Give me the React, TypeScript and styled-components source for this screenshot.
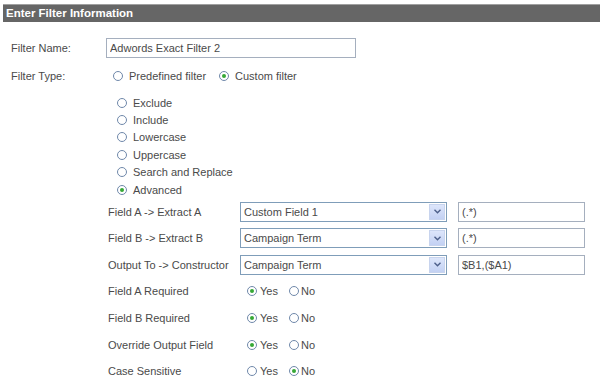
import React from 'react';
import styled, { createGlobalStyle } from 'styled-components';

const GlobalStyle = createGlobalStyle`
  body {
    margin: 0;
    background: #fff;
    font-family: "Liberation Sans", Arial, sans-serif;
    font-size: 11px;
    color: #4a4a4a;
  }
`;

const options = ['Exclude', 'Include', 'Lowercase', 'Uppercase', 'Search and Replace', 'Advanced'];

const fields = [
  { label: 'Field A -> Extract A', select: 'Custom Field 1', value: '(.*)' },
  { label: 'Field B -> Extract B', select: 'Campaign Term', value: '(.*)' },
  { label: 'Output To -> Constructor', select: 'Campaign Term', value: '$B1,($A1)' },
];

const flags = [
  { label: 'Field A Required', yes: true },
  { label: 'Field B Required', yes: true },
  { label: 'Override Output Field', yes: true },
  { label: 'Case Sensitive', yes: false },
];

const Radio: React.FC<{ checked?: boolean; label: string; gap?: number }> = ({ checked, label, gap }) => (
  <RadioLabel gap={gap}>
    <Dot checked={checked} />
    {label}
  </RadioLabel>
);

const App: React.FC = () => {
  return (
    <Page>
      <GlobalStyle />
      <Header>Enter Filter Information</Header>
      <Form>
        <Row>
          <Label>Filter Name:</Label>
          <TextInput width={250} defaultValue="Adwords Exact Filter 2" />
        </Row>
        <TypeRow>
          <Label>Filter Type:</Label>
          <Radios>
            <Radio label="Predefined filter" />
            <Radio checked label="Custom filter" />
          </Radios>
        </TypeRow>
        <OptionList>
          {options.map((o) => (
            <Option key={o}>
              <Radio checked={o === 'Advanced'} label={o} />
            </Option>
          ))}
        </OptionList>
        <SubGrid>
          {fields.map((f) => (
            <SubRow key={f.label}>
              <SubLabel>{f.label}</SubLabel>
              <Select>
                <SelectText>{f.select}</SelectText>
                <Arrow>
                  <svg width="7" height="5" viewBox="0 0 7 5">
                    <path d="M0.5 0.8 L3.5 3.8 L6.5 0.8" fill="none" stroke="#4d5f8a" strokeWidth="1.4" />
                  </svg>
                </Arrow>
              </Select>
              <TextInput width={127} defaultValue={f.value} />
            </SubRow>
          ))}
          {flags.map((f) => (
            <SubRow key={f.label}>
              <SubLabel>{f.label}</SubLabel>
              <YesNo>
                <Radio checked={f.yes} label="Yes" gap={3} />
                <Radio checked={!f.yes} label="No" gap={2} />
              </YesNo>
            </SubRow>
          ))}
        </SubGrid>
      </Form>
    </Page>
  );
};

const Page = styled.div`
  width: 600px;
  height: 387px;
  padding-top: 4px;
  box-sizing: border-box;
  overflow: hidden;
`;

const Header = styled.div`
  margin-left: 3px;
  height: 18px;
  background: #666;
  border-top: 1px solid #a0a0a0;
  box-sizing: border-box;
  color: #fff;
  font-weight: bold;
  font-size: 11.5px;
  line-height: 17px;
  padding-left: 3px;
`;

const Form = styled.div`
  padding: 16px 0 0 11px;
`;

const Row = styled.div`
  display: flex;
  align-items: center;
  height: 20px;
`;

const TypeRow = styled(Row)`
  height: 17px;
  margin-top: 9px;
`;

const Label = styled.div`
  width: 95px;
`;

const TextInput = styled.input<{ width: number }>`
  width: ${(p) => p.width}px;
  height: 20px;
  box-sizing: border-box;
  border: 1px solid #a5afbe;
  padding: 0 3px;
  font-family: "Liberation Sans", Arial, sans-serif;
  font-size: 11px;
  color: #4a4a4a;
  outline: none;
`;

const Radios = styled.div`
  display: flex;
  gap: 13px;
  padding-left: 7px;
`;

const RadioLabel = styled.label<{ gap?: number }>`
  display: flex;
  align-items: center;
  gap: ${(p) => p.gap ?? 6}px;
  white-space: nowrap;
`;

const Dot = styled.span<{ checked?: boolean }>`
  width: 10px;
  height: 10px;
  box-sizing: border-box;
  border-radius: 50%;
  border: 1px solid #6f88aa;
  background: #fff;
  display: flex;
  align-items: center;
  justify-content: center;

  &::after {
    content: '';
    width: 4px;
    height: 4px;
    border-radius: 50%;
    background: ${(p) => (p.checked ? '#36a836' : 'transparent')};
  }
`;

const OptionList = styled.div`
  padding: 10px 0 0 106px;
`;

const Option = styled.div`
  height: 17.4px;
  display: flex;
  align-items: center;
`;

const SubGrid = styled.div`
  padding-left: 97px;
`;

const SubRow = styled.div`
  height: 26.6px;
  display: flex;
  align-items: center;
`;

const SubLabel = styled.div`
  width: 132px;
`;

const Select = styled.div`
  width: 207px;
  height: 20px;
  box-sizing: border-box;
  border: 1px solid #7f9db9;
  display: flex;
  align-items: center;
  justify-content: space-between;
  padding: 0 1px 0 3px;
  margin-right: 11px;
`;

const SelectText = styled.span`
  font-size: 11px;
`;

const Arrow = styled.span`
  width: 16px;
  height: 16px;
  background: linear-gradient(#dde6fb, #c3d1f3);
  border: 1px solid #c8d4ee;
  box-sizing: border-box;
  display: flex;
  align-items: center;
  justify-content: center;
`;

const YesNo = styled.div`
  display: flex;
  gap: 11px;
  padding-left: 7px;
`;

export default App;
